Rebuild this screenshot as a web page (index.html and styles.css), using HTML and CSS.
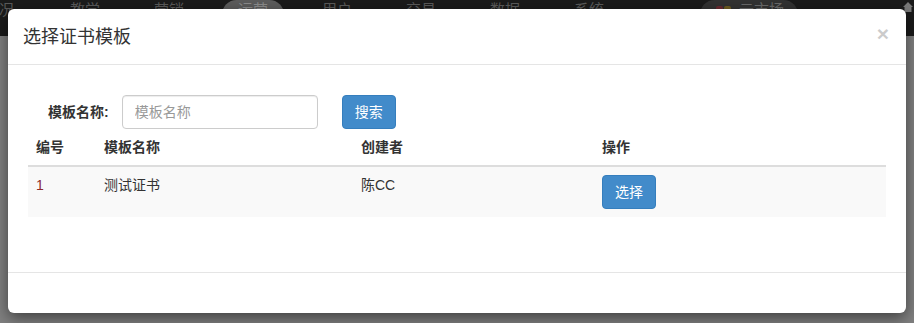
FILE: index.html
```html
<!DOCTYPE html>
<html lang="zh-CN">
<head>
    <meta charset="UTF-8">
    <title>选择证书模板</title>
    <link rel="stylesheet" href="styles.css">
</head>
<body>
    <div class="topbar">
        <span class="nav-edge">况</span>
        <span class="nav-item">教学</span>
        <span class="nav-item">营销</span>
        <span class="nav-item active"><span class="pill">运营</span></span>
        <span class="nav-item">用户</span>
        <span class="nav-item">交易</span>
        <span class="nav-item">数据</span>
        <span class="nav-item">系统</span>
        <span class="market">
            <i class="sq red"></i><i class="sq yellow"></i>
            <span>云市场</span>
        </span>
        <svg class="home" width="12" height="12" viewBox="0 0 12 12">
            <path d="M6 1 L11 6 L9.5 6 L9.5 11 L2.5 11 L2.5 6 L1 6 Z" fill="#7a7a7a"/>
        </svg>
    </div>

    <div class="modal">
        <div class="modal-header">
            <span class="close">&times;</span>
            <h4 class="modal-title">选择证书模板</h4>
        </div>
        <div class="modal-body">
            <div class="search-row">
                <label>模板名称:</label>
                <input type="text" placeholder="模板名称">
                <button class="btn">搜索</button>
            </div>
            <table class="table">
                <thead>
                    <tr>
                        <th class="c1">编号</th>
                        <th class="c2">模板名称</th>
                        <th class="c3">创建者</th>
                        <th>操作</th>
                    </tr>
                </thead>
                <tbody>
                    <tr>
                        <td class="num">1</td>
                        <td>测试证书</td>
                        <td>陈CC</td>
                        <td><button class="btn">选择</button></td>
                    </tr>
                </tbody>
            </table>
        </div>
        <div class="modal-footer"></div>
    </div>
</body>
</html>
```

FILE: styles.css
```css
body {
    margin: 0;
    font-family: "Liberation Sans", "Noto Sans CJK SC", sans-serif;
    font-size: 14px;
    color: #333;
    background-color: #808080;
    height: 323px;
    overflow: hidden;
}
.topbar {
    height: 36px;
    background-color: #1b1b1b;
    display: flex;
    align-items: flex-start;
    color: #5a5a5a;
    font-size: 15px;
    line-height: 18px;
    position: relative;
}
.nav-edge {
    width: 44px;
    margin-left: -1px;
    padding-top: 1px;
}
.nav-item {
    width: 84px;
    text-align: center;
    padding-top: 1px;
}
.nav-item.active {
    padding-top: 0;
}
.pill {
    display: inline-block;
    background-color: #5c5c5c;
    color: #8c8c8c;
    border-radius: 16px;
    padding: 1px 16px 10px;
}
.market {
    margin-left: 69px;
    background-color: #323232;
    border-radius: 16px;
    padding: 1px 14px 10px 16px;
    display: flex;
    align-items: center;
    color: #6a6a6a;
}
.sq {
    display: inline-block;
    width: 7px;
    height: 8px;
    border-radius: 2px;
    margin-right: 1px;
}
.sq.red { background-color: #6a2a30; }
.sq.yellow { background-color: #6e5c20; margin-right: 8px; }
.home {
    position: absolute;
    right: 0;
    top: 1px;
}
.modal {
    position: absolute;
    left: 8px;
    top: 9px;
    width: 898px;
    background-color: #fff;
    border-radius: 6px;
    box-shadow: 0 5px 15px rgba(0, 0, 0, 0.5);
}
.modal-header {
    padding: 15px;
    border-bottom: 1px solid #e5e5e5;
    height: 25px;
}
.modal-title {
    margin: 0;
    font-size: 18px;
    font-weight: normal;
    line-height: 26px;
    color: #333;
}
.close {
    float: right;
    font-size: 21px;
    font-weight: bold;
    line-height: 20px;
    color: #000;
    opacity: 0.2;
    margin-right: 2px;
}
.modal-body {
    padding: 30px 20px 35px;
}
.search-row {
    display: flex;
    align-items: center;
    padding-left: 20px;
}
.search-row label {
    font-weight: bold;
    margin-right: 13px;
    line-height: 20px;
}
.search-row input {
    box-sizing: border-box;
    width: 196px;
    height: 34px;
    padding: 6px 12px;
    border: 1px solid #ccc;
    border-radius: 4px;
    font-family: inherit;
    font-size: 14px;
    color: #555;
    margin-right: 24px;
    box-shadow: inset 0 1px 1px rgba(0, 0, 0, 0.075);
}
.search-row input::placeholder {
    color: #999;
}
.btn {
    box-sizing: border-box;
    height: 34px;
    padding: 6px 12px;
    font-family: inherit;
    font-size: 14px;
    line-height: 20px;
    color: #fff;
    background-color: #428bca;
    border: 1px solid #357ebd;
    border-radius: 4px;
}
.table {
    width: 100%;
    border-collapse: collapse;
    border-spacing: 0;
    margin-bottom: 20px;
}
.table th,
.table td {
    padding: 8px;
    line-height: 20px;
    text-align: left;
    vertical-align: top;
}
.table th {
    font-weight: bold;
    border-bottom: 2px solid #ddd;
}
.table tbody tr {
    background-color: #f9f9f9;
}
.c1 { width: 52px; }
.c2 { width: 241px; }
.c3 { width: 225px; }
.num {
    color: #8e2a2a;
}
.modal-footer {
    height: 40px;
    border-top: 1px solid #e5e5e5;
}
```
